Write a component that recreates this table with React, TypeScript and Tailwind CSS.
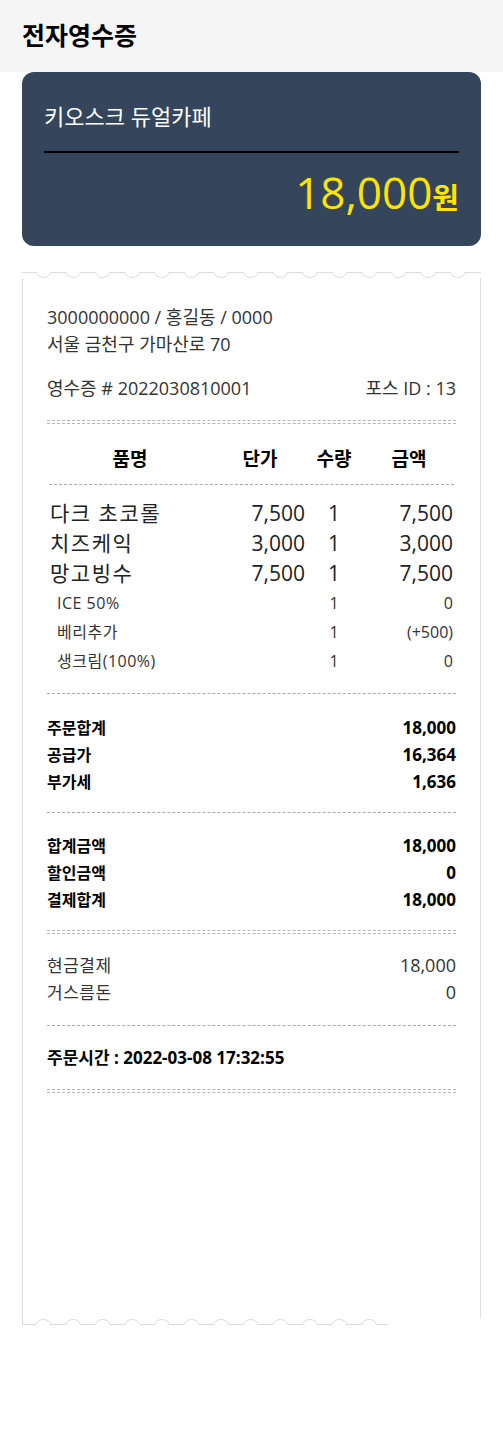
import React from 'react'

const font = { fontFamily: '"Open Sans", "Noto Sans CJK KR", sans-serif' }

type Item = { name: string; price: string; qty: string; amount: string }

const items: Item[] = [
  { name: '다크 초코롤', price: '7,500', qty: '1', amount: '7,500' },
  { name: '치즈케익', price: '3,000', qty: '1', amount: '3,000' },
  { name: '망고빙수', price: '7,500', qty: '1', amount: '7,500' },
]

const options = [
  { name: 'ICE 50%', qty: '1', amount: '0' },
  { name: '베리추가', qty: '1', amount: '(+500)' },
  { name: '생크림(100%)', qty: '1', amount: '0' },
]

function scallopPath(width: number, y: number, dir: number, start: number, end: number) {
  // dir 1 = dips down, -1 = bumps up
  let d = `M0 ${y}`
  for (let cx = start; cx + 7 <= end; cx += 29.6) {
    d += ` L${cx - 7} ${y} A7 5 0 0 ${dir === 1 ? 0 : 1} ${cx + 7} ${y}`
  }
  d += ` L${Math.min(width, end)} ${y}`
  return d
}

function Dashed() {
  return <div className="border-t border-dashed border-[#a8a8a8]" />
}

function DoubleDashed() {
  return <div className="h-[4px] border-y border-dashed border-[#b5b5b5]" />
}

function Row({ label, value, bold }: { label: string; value: string; bold?: boolean }) {
  return (
    <div className={`flex h-[27px] items-center justify-between ${bold ? 'font-bold text-black' : 'text-[#333]'}`}>
      <span className={bold ? 'text-[16px]' : 'text-[17px] tracking-[0.5px]'}>{label}</span>
      <span className={bold ? 'text-[17px]' : 'text-[18px]'}>{value}</span>
    </div>
  )
}

export default function App() {
  return (
    <div className="w-[503px] bg-white pb-[114px]" style={font}>
      <header className="h-[72px] bg-[#f5f5f5] px-[22px] flex items-center">
        <h1 className="text-[25px] font-bold text-black">전자영수증</h1>
      </header>

      <div className="mx-[22px] h-[174px] rounded-xl bg-[#34455c] px-[22px] pt-[28px]">
        <p className="text-[22px] leading-[32px] text-white">키오스크 듀얼카페</p>
        <div className="mt-[19px] h-[2px] bg-black" />
        <div className="mt-[17px] flex items-baseline justify-end text-[#ffe400] leading-none">
          <span className="text-[44px]">18,000</span>
          <span className="text-[29px] font-bold">원</span>
        </div>
      </div>

      <div className="mx-[22px] mt-[26px] w-[459px]">
        <svg width="459" height="6" viewBox="0 0 459 6" className="block">
          <path d={scallopPath(459, 0.5, 1, 21.5, 459)} fill="none" stroke="#dcdcdc" strokeWidth="1" />
        </svg>
        <div className="h-[1040px] border-x border-[#dcdcdc] px-[24px] pt-[26px]">
          <div className="text-[18px] leading-[27px] text-[#333]">
            <p>3000000000 / 홍길동 / 0000</p>
            <p>서울 금천구 가마산로 70</p>
          </div>
          <div className="mt-[17px] flex justify-between text-[18px] leading-[27px] text-[#333]">
            <span>영수증 # 2022030810001</span>
            <span>포스 ID : 13</span>
          </div>

          <div className="mt-[18px]"><DoubleDashed /></div>

          <div className="mt-[20px] grid grid-cols-[166px_94px_54px_96px] h-[30px] items-center text-[19px] font-bold text-black">
            <span className="text-center">품명</span>
            <span className="text-center">단가</span>
            <span className="text-center">수량</span>
            <span className="text-center">금액</span>
          </div>
          <div className="mt-[10px] px-[2px]"><Dashed /></div>

          <div className="mt-[13px]">
            {items.map((it) => (
              <div key={it.name} className="grid grid-cols-[166px_94px_54px_96px] h-[30px] items-center text-[21px] text-[#222]">
                <span className="pl-[3px] tracking-[1.5px]">{it.name}</span>
                <span className="text-right pr-[2px]">{it.price}</span>
                <span className="text-center">{it.qty}</span>
                <span className="text-right pr-[4px]">{it.amount}</span>
              </div>
            ))}
            {options.map((o) => (
              <div key={o.name} className="grid grid-cols-[166px_94px_54px_96px] h-[29px] items-center text-[16px] text-[#333]">
                <span className="pl-[10px] tracking-[0.5px]">{o.name}</span>
                <span />
                <span className="text-center">{o.qty}</span>
                <span className="text-right pr-[4px]">{o.amount}</span>
              </div>
            ))}
          </div>

          <div className="mt-[18px]"><Dashed /></div>
          <div className="mt-[20px]">
            <Row label="주문합계" value="18,000" bold />
            <Row label="공급가" value="16,364" bold />
            <Row label="부가세" value="1,636" bold />
          </div>

          <div className="mt-[17px]"><Dashed /></div>
          <div className="mt-[19px]">
            <Row label="합계금액" value="18,000" bold />
            <Row label="할인금액" value="0" bold />
            <Row label="결제합계" value="18,000" bold />
          </div>

          <div className="mt-[17px]"><DoubleDashed /></div>
          <div className="mt-[18px]">
            <Row label="현금결제" value="18,000" />
            <Row label="거스름돈" value="0" />
          </div>

          <div className="mt-[19px]"><Dashed /></div>
          <p className="mt-[18px] text-[17px] leading-[27px] font-bold text-black">주문시간 : 2022-03-08 17:32:55</p>
          <div className="mt-[18px]"><DoubleDashed /></div>
        </div>
        <svg width="459" height="8" viewBox="0 0 459 8" className="block">
          <path d="M0.5 0 V6.5" fill="none" stroke="#dcdcdc" strokeWidth="1" />
          <path d={scallopPath(366, 6.5, -1, 21.5, 366)} fill="none" stroke="#dcdcdc" strokeWidth="1" />
        </svg>
      </div>
    </div>
  )
}
